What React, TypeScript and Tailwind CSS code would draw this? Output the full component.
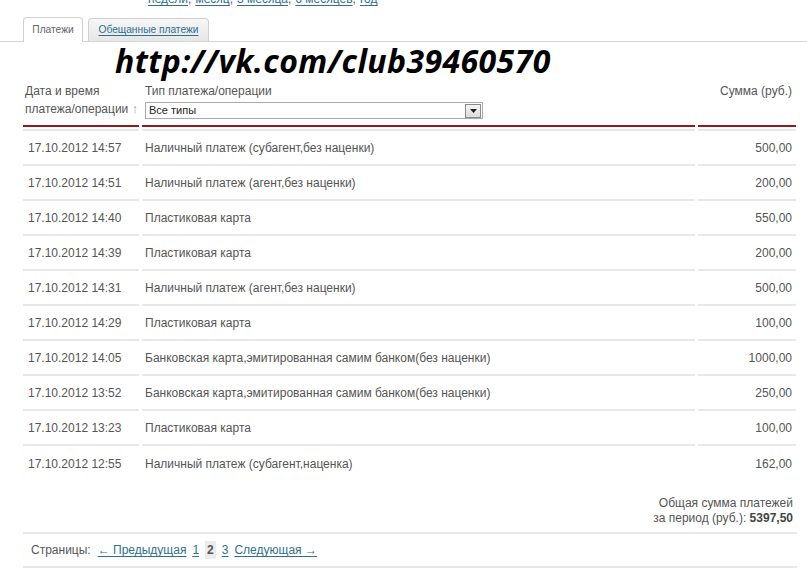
import React from 'react';

const rows: [string, string, string][] = [
  ['17.10.2012 14:57', 'Наличный платеж (субагент,без наценки)', '500,00'],
  ['17.10.2012 14:51', 'Наличный платеж (агент,без наценки)', '200,00'],
  ['17.10.2012 14:40', 'Пластиковая карта', '550,00'],
  ['17.10.2012 14:39', 'Пластиковая карта', '200,00'],
  ['17.10.2012 14:31', 'Наличный платеж (агент,без наценки)', '500,00'],
  ['17.10.2012 14:29', 'Пластиковая карта', '100,00'],
  ['17.10.2012 14:05', 'Банковская карта,эмитированная самим банком(без наценки)', '1000,00'],
  ['17.10.2012 13:52', 'Банковская карта,эмитированная самим банком(без наценки)', '250,00'],
  ['17.10.2012 13:23', 'Пластиковая карта', '100,00'],
  ['17.10.2012 12:55', 'Наличный платеж (субагент,наценка)', '162,00'],
];

const link = 'text-[#2f6f8f] underline underline-offset-2';

export default function App() {
  return (
    <div className="w-[807px] h-[577px] overflow-hidden bg-white text-[12px] text-[#555] font-['Liberation_Sans',Arial,sans-serif]">
      {/* period links, cut off at the top */}
      <div className="-mt-[9px] h-[17px] pl-[148px] flex gap-[4px] leading-[17px]">
        <span><a className={link}>недели</a>,</span>
        <span><a className={link}>месяц</a>,</span>
        <span><a className={link}>3 месяца</a>,</span>
        <span><a className={link}>6 месяцев</a>,</span>
        <a className={link}>год</a>
      </div>

      {/* tabs */}
      <div className="mt-[10px] flex items-end gap-[5px] pl-[23px] border-b border-[#d4d4d4] h-[24px] text-[10.2px]">
        <div className="h-[25px] -mb-px w-[60px] flex items-center justify-center bg-white border border-b-0 border-[#d0d0d0] rounded-t-[4px] text-[#666]">
          Платежи
        </div>
        <div className="h-[23px] w-[121px] flex items-center justify-center bg-gradient-to-b from-[#f7f7f7] to-[#e6e6e6] border border-b-0 border-[#d0d0d0] rounded-t-[4px]">
          <a className={link}>Обещанные платежи</a>
        </div>
      </div>

      {/* watermark */}
      <div className="h-[40px] pl-[115px] pt-[1px] text-[32px] leading-[36px] font-bold italic text-black font-['Open_Sans','Noto_Sans',sans-serif] tracking-[0.4px]">
        http://vk.com/club39460570
      </div>

      <div className="pl-[23px] w-[797px]">
        {/* header */}
        <div className="grid grid-cols-[116px_553px_98px] gap-x-[3px] h-[43px] leading-[17px] pt-[1px]">
          <div className="pl-[2px]">
            <div>Дата и время</div>
            <div>платежа/операции <span className="text-[#999] text-[13px]">↑</span></div>
          </div>
          <div className="pl-[3px]">
            <div>Тип платежа/операции</div>
            <div className="mt-[2px] w-[338px] h-[17px] border border-[#a9a9a9] flex items-center justify-between pl-[3px] pr-px text-[11px] text-[#222] leading-none">
              <span>Все типы</span>
              <span className="w-[16px] h-[14px] border border-[#8a8a8a] bg-gradient-to-b from-[#f6f6f6] to-[#dcdcdc] flex items-center justify-center">
                <svg width="7" height="4" viewBox="0 0 7 4"><path d="M0 0h7L3.5 4z" fill="#222" /></svg>
              </span>
            </div>
          </div>
          <div className="text-right pr-[4px]">Сумма (руб.)</div>
        </div>

        {/* red rule + light rule */}
        <div className="grid grid-cols-[116px_553px_98px] gap-x-[3px]">
          <div className="h-[2px] bg-[#8c1c22]" />
          <div className="h-[2px] bg-[#8c1c22]" />
          <div className="h-[2px] bg-[#8c1c22]" />
        </div>
        <div className="mt-[2px] grid grid-cols-[116px_553px_98px] gap-x-[3px]">
          <div className="h-[2px] bg-[#e8e8e8]" />
          <div className="h-[2px] bg-[#e8e8e8]" />
          <div className="h-[2px] bg-[#e8e8e8]" />
        </div>

        {/* rows */}
        {rows.map(([date, type, sum], i) => {
          const line = i < rows.length - 1 ? 'border-b-2 border-[#e8e8e8]' : '';
          return (
            <div key={i} className="grid grid-cols-[116px_553px_98px] gap-x-[3px] h-[35px]">
              <div className={`pl-[5px] flex items-center ${line}`}>{date}</div>
              <div className={`pl-[3px] flex items-center ${line}`}>{type}</div>
              <div className={`pr-[4px] flex items-center justify-end ${line}`}>{sum}</div>
            </div>
          );
        })}

        {/* total */}
        <div className="mt-[15px] pr-[4px] text-right leading-[15px] h-[36px]">
          <div>Общая сумма платежей</div>
          <div>за период (руб.): <b className="text-[#444]">5397,50</b></div>
        </div>

        {/* pagination */}
        <div className="border-y-2 border-[#e8e8e8] h-[36px] flex items-center pl-[8px] gap-[6px]">
          <span className="mr-[1px]">Страницы:</span>
          <a className={link}>← Предыдущая</a>
          <a className={link}>1</a>
          <b className="bg-[#ececec] px-[2px] text-[#555]">2</b>
          <a className={link}>3</a>
          <a className={link}>Следующая →</a>
        </div>
      </div>
    </div>
  );
}
